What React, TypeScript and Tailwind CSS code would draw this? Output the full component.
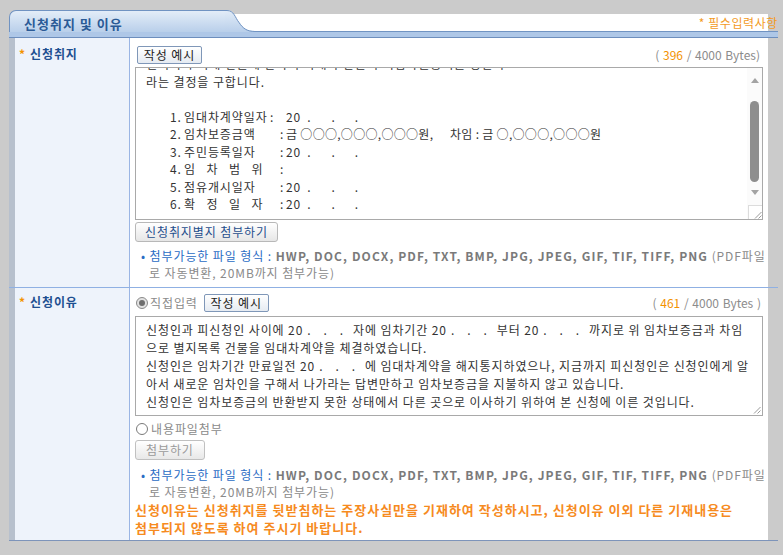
import React from 'react';

const FORMATS = 'HWP, DOC, DOCX, PDF, TXT, BMP, JPG, JPEG, GIF, TIF, TIFF, PNG';

// "20 .  .  ." blank used in the reason text
const Blank: React.FC = () => (
  <>
    <span>20</span>
    <span className="ml-[4px]">.</span>
    <span className="ml-[12px]">.</span>
    <span className="ml-[12px]">.</span>
    <span className="ml-[9px]" />
  </>
);

const ListDate = () => (
  <>
    <span>20</span>
    <span className="ml-[6px]">.</span>
    <span className="ml-[20px]">.</span>
    <span className="ml-[19px]">.</span>
  </>
);

const listRows = [
  { n: '1.', label: '임대차계약일자', lw: 'w-[86px]', kind: 'date' },
  { n: '2.', label: '임차보증금액', lw: 'w-[96px]', kind: 'money' },
  { n: '3.', label: '주민등록일자', lw: 'w-[96px]', kind: 'date' },
  { n: '4.', label: '임 차 범 위', lw: 'w-[96px] [word-spacing:7px]', kind: 'none' },
  { n: '5.', label: '점유개시일자', lw: 'w-[96px]', kind: 'date' },
  { n: '6.', label: '확 정 일 자', lw: 'w-[96px] [word-spacing:7px]', kind: 'date' },
];

const ExampleButton = () => (
  <button className="block h-[18px] w-[65px] rounded-[2px] border border-[#7f97b8] bg-gradient-to-b from-white to-[#e6ebf2] text-[12px] leading-[16px] text-[#222]">
    작성 예시
  </button>
);

const Bytes: React.FC<{ n: string; tail?: string }> = ({ n, tail = ')' }) => (
  <span className="text-[12px] tracking-normal text-[#8c8c8c] [word-spacing:1px]">
    ( <span className="text-[#f39200]">{n}</span> / 4000 Bytes{tail}
  </span>
);

const FileNote: React.FC<{ mt: string }> = ({ mt }) => (
  <div className={`ml-[6px] text-[12px] leading-[17px] ${mt}`}>
    <div className="whitespace-nowrap">
      <span className="text-[#2a6cc4]">• 첨부가능한 파일 형식 : </span>
      <span className="font-bold text-[#7a7a7a] tracking-[1.1px]">{FORMATS}</span>
      <span className="text-[#8a8a8a]"> (PDF파일</span>
    </div>
    <div className="pl-[8px] text-[#8a8a8a]">로 자동변환, 20MB까지 첨부가능)</div>
  </div>
);

const Grip = () => (
  <svg width="9" height="9" viewBox="0 0 9 9" className="block">
    <path d="M8.5 2 L2 8.5 M8.5 5.5 L5.5 8.5" stroke="#9a9a9a" strokeWidth="1" />
  </svg>
);

const Label: React.FC<{ text: string }> = ({ text }) => (
  <div className="flex items-start pl-[4px] text-[12px] leading-[16px]">
    <span className="w-[11px] font-bold text-[#f39200]">*</span>
    <span className="font-bold text-[#1d4f91]">{text}</span>
  </div>
);

export default function App() {
  return (
    <div className="relative h-[555px] w-[783px] overflow-hidden bg-[#cbcbcb] font-['Noto_Sans_CJK_KR',sans-serif] tracking-[0.9px] text-[#333]">
      {/* tab header */}
      <div className="ml-[9px] mt-[10px] flex h-[22px] w-[769px]">
        <div className="w-[216px] rounded-tl-[7px] border-l border-t border-[#7093c2] bg-gradient-to-b from-[#e3edf8] to-[#b9cfea] pl-[14px] pt-[5px] text-[13px] font-bold leading-[16px] tracking-[1px] text-[#2a5a96]">
          신청취지 및 이유
        </div>
        <svg width="36" height="22" viewBox="0 0 36 22" className="block shrink-0">
          <defs>
            <linearGradient id="tabg" x1="0" y1="0" x2="0" y2="1">
              <stop offset="0" stopColor="#e3edf8" />
              <stop offset="1" stopColor="#b9cfea" />
            </linearGradient>
          </defs>
          <rect x="0" y="0" width="36" height="4" fill="#cbcbcb" />
          <rect x="0" y="4" width="36" height="18" fill="#ffffff" />
          <path d="M0 0 L2 0 C9 0 10 7 14 12 C18 18 22 21 30 21 L36 21 L36 22 L0 22 Z" fill="url(#tabg)" />
          <path d="M0 0.5 L2 0.5 C9 0.5 10 7.5 14 12.5 C18 18.5 22 21.5 30 21.5 L36 21.5" fill="none" stroke="#7093c2" strokeWidth="1" />
        </svg>
        <div className="flex flex-1 flex-col">
          <div className="h-[4px]" />
          <div className="flex flex-1">
            <div className="relative flex-1 border-b border-[#7093c2] bg-white">
              <span className="absolute right-[-10px] top-[1px] whitespace-nowrap text-[12px] leading-[16px] tracking-[0.6px] text-[#f39a1e]">
                * 필수입력사항
              </span>
            </div>
            <div className="w-[10px] border-b border-[#7093c2]" />
          </div>
        </div>
      </div>
      <div className="ml-[9px] h-[6px] w-[769px] border-b border-[#6d8ebd] bg-[#aec7e7]" />

      {/* table */}
      <div className="ml-[9px] w-[769px] border-b border-[#7d94ba]">
        {/* row 1 */}
        <div className="flex border-b border-[#8fb0e3]">
          <div className="w-[6px] bg-[#b7c0cd]" />
          <div className="w-[115px] border-r border-[#9ab5e4] bg-[#eef3fb] pt-[8px]">
            <Label text="신청취지" />
          </div>
          <div className="w-[638px] bg-white pb-[6px] pl-[5px] pt-[8px]">
            <div className="flex h-[18px] items-center justify-between pr-[8px]">
              <div className="ml-[2px]">
                <ExampleButton />
              </div>
              <Bytes n="396" />
            </div>
            <div className="mt-[3px] flex h-[153px] w-[628px] border border-[#a9a9a9]">
              <div className="flex-1 overflow-hidden pl-[10px] text-[12px] leading-[17.5px] text-[#333]">
                <div className="mt-[-13px] whitespace-nowrap">
                  <div>별지목록 기재 건물에 관하여 아래와 같은 주택임차권등기를 명한다</div>
                  <div>라는 결정을 구합니다.</div>
                  <div>&nbsp;</div>
                  {listRows.map((r) => (
                    <div key={r.n} className="flex pl-[24px]">
                      <span className="w-[14px]">{r.n}</span>
                      <span className={`inline-block ${r.lw}`}>{r.label}</span>
                      <span className={r.n === '1.' ? 'w-[16px]' : 'w-[6px]'}>:</span>
                      {r.kind === 'date' && <ListDate />}
                      {r.kind === 'money' && (
                        <>
                          <span className="inline-block w-[164px] tracking-[0.3px]">금 ○○○,○○○,○○○원,</span>
                          <span className="tracking-[0.3px]">차임 : 금 ○,○○○,○○○원</span>
                        </>
                      )}
                    </div>
                  ))}
                </div>
              </div>
              <div className="flex w-[15px] flex-col items-center bg-[#fbfbfb]">
                <div className="flex h-[24px] items-center">
                  <svg width="8" height="5" viewBox="0 0 8 5"><path d="M4 0 L8 5 L0 5 Z" fill="#a3a3a3" /></svg>
                </div>
                <div className="mt-[9px] h-[81px] w-[9px] rounded-full bg-[#8e8e8e]" />
                <div className="flex h-[20px] items-center">
                  <svg width="8" height="5" viewBox="0 0 8 5"><path d="M0 0 L8 0 L4 5 Z" fill="#a3a3a3" /></svg>
                </div>
                <div className="mt-auto flex h-[14px] w-[14px] items-end justify-end border-l border-t border-[#dcdcdc] bg-white">
                  <Grip />
                </div>
              </div>
            </div>
            <button className="mt-[2px] block h-[20px] rounded-[3px] border border-[#b8b8b8] bg-gradient-to-b from-white to-[#e6e6e6] px-[9px] text-[12px] leading-[18px] text-[#1f4e8c]">
              신청취지별지 첨부하기
            </button>
            <FileNote mt="mt-[5px]" />
          </div>
          <div className="w-[10px] bg-[#cbcbcb]" />
        </div>

        {/* row 2 */}
        <div className="flex">
          <div className="w-[6px] bg-[#b7c0cd]" />
          <div className="w-[115px] border-r border-[#9ab5e4] bg-[#eef3fb] pt-[6px]">
            <Label text="신청이유" />
          </div>
          <div className="w-[638px] bg-white pb-[3px] pl-[5px] pt-[6px]">
            <div className="flex h-[18px] items-center justify-between pr-[7px]">
              <div className="flex items-center">
                <span className="ml-[1px] flex h-[12px] w-[12px] items-center justify-center rounded-full border border-[#8a8a8a] bg-[#e2e2e2]">
                  <span className="h-[6px] w-[6px] rounded-full bg-[#6e6e6e]" />
                </span>
                <span className="ml-[2px] text-[12px] text-[#8a8a8a]">직접입력</span>
                <span className="ml-[6px]">
                  <ExampleButton />
                </span>
              </div>
              <Bytes n="461" tail=" )" />
            </div>
            <div className="relative mt-[4px] h-[100px] w-[628px] border border-[#a9a9a9] pl-[10px] pt-[4px] text-[12px] leading-[18px] text-[#333]">
              <div className="whitespace-nowrap">
                신청인과 피신청인 사이에 <Blank />자에 임차기간 <Blank />부터 <Blank />까지로 위 임차보증금과 차임
              </div>
              <div className="whitespace-nowrap">으로 별지목록 건물을 임대차계약을 체결하였습니다.</div>
              <div className="whitespace-nowrap">
                신청인은 임차기간 만료일전 <Blank />에 임대차계약을 해지통지하였으나, 지금까지 피신청인은 신청인에게 알
              </div>
              <div className="whitespace-nowrap">아서 새로운 임차인을 구해서 나가라는 답변만하고 임차보증금을 지불하지 않고 있습니다.</div>
              <div className="whitespace-nowrap">신청인은 임차보증금의 반환받지 못한 상태에서 다른 곳으로 이사하기 위하여 본 신청에 이른 것입니다.</div>
              <div className="absolute bottom-[1px] right-[1px]">
                <Grip />
              </div>
            </div>
            <div className="mt-[5px] flex h-[16px] items-center">
              <span className="ml-[1px] h-[12px] w-[12px] rounded-full border border-[#7a7a7a] bg-white" />
              <span className="ml-[3px] text-[12px] text-[#8a8a8a]">내용파일첨부</span>
            </div>
            <button className="mt-[3px] block h-[20px] rounded-[3px] border border-[#c0c0c0] bg-gradient-to-b from-white to-[#e8e8e8] px-[10px] text-[12px] leading-[18px] text-[#9a9a9a]">
              첨부하기
            </button>
            <FileNote mt="mt-[6px]" />
            <div className="mt-[1px] text-[13px] font-bold leading-[18px] tracking-[1px] text-[#f68b1f]">
              <div className="whitespace-nowrap">신청이유는 신청취지를 뒷받침하는 주장사실만을 기재하여 작성하시고, 신청이유 이외 다른 기재내용은</div>
              <div className="whitespace-nowrap">첨부되지 않도록 하여 주시기 바랍니다.</div>
            </div>
          </div>
          <div className="w-[10px] bg-[#cbcbcb]" />
        </div>
      </div>
    </div>
  );
}
